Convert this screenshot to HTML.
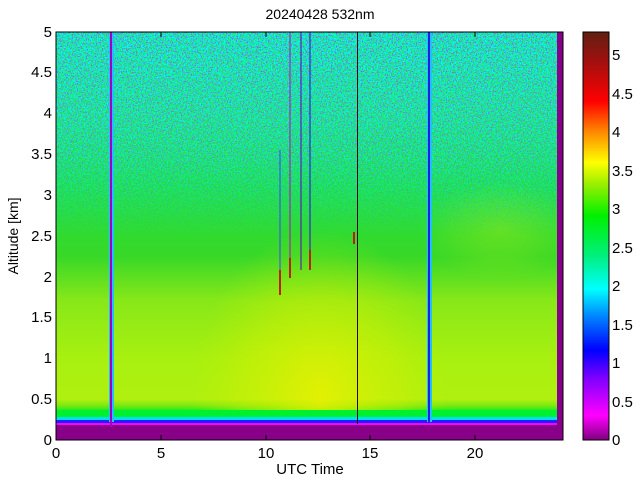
<!DOCTYPE html>
<html><head><style>
body{margin:0;width:640px;height:480px;background:#fff;overflow:hidden;font-family:"Liberation Sans",sans-serif;}
svg{display:block}
</style></head><body>
<svg width="640" height="480" xmlns="http://www.w3.org/2000/svg" font-family="Liberation Sans, sans-serif" font-size="14" fill="#000">
<defs>
<clipPath id="cp"><rect x="56" y="32" width="507" height="408"/></clipPath>
<linearGradient id="bg" x1="0" y1="0" x2="0" y2="1">
<stop offset="0" stop-color="#28e080"/>
<stop offset="0.2" stop-color="#28e068"/>
<stop offset="0.38" stop-color="#20e040"/>
<stop offset="0.55" stop-color="#38d828"/>
<stop offset="0.66" stop-color="#88e818"/>
<stop offset="0.8" stop-color="#a8f010"/>
<stop offset="0.9" stop-color="#b0f010"/>
<stop offset="0.915" stop-color="#80e810"/>
<stop offset="0.932" stop-color="#00f020"/>
<stop offset="0.946" stop-color="#00e8e0"/>
<stop offset="0.953" stop-color="#2020ff"/>
<stop offset="0.96" stop-color="#ff00ff"/>
<stop offset="0.965" stop-color="#880088"/>
<stop offset="1" stop-color="#880088"/>
</linearGradient>
<radialGradient id="yel" cx="0.5" cy="0.5" r="0.5">
<stop offset="0" stop-color="#f0f000" stop-opacity="0.8"/>
<stop offset="0.6" stop-color="#d8f000" stop-opacity="0.4"/>
<stop offset="1" stop-color="#c0f000" stop-opacity="0"/>
</radialGradient>
<linearGradient id="cb" x1="0" y1="1" x2="0" y2="0">
<stop offset="0" stop-color="#800080"/>
<stop offset="0.06" stop-color="#ff00ff"/>
<stop offset="0.15" stop-color="#8000ff"/>
<stop offset="0.22" stop-color="#0000ff"/>
<stop offset="0.3" stop-color="#0080ff"/>
<stop offset="0.37" stop-color="#00ffff"/>
<stop offset="0.45" stop-color="#00f080"/>
<stop offset="0.55" stop-color="#00f000"/>
<stop offset="0.63" stop-color="#a0f000"/>
<stop offset="0.68" stop-color="#ffff00"/>
<stop offset="0.76" stop-color="#ff8000"/>
<stop offset="0.83" stop-color="#ff0000"/>
<stop offset="0.93" stop-color="#a01010"/>
<stop offset="1" stop-color="#602010"/>
</linearGradient>
<linearGradient id="fade" x1="0" y1="0" x2="0" y2="1">
<stop offset="0" stop-color="#fff" stop-opacity="1"/>
<stop offset="0.3" stop-color="#fff" stop-opacity="0.6"/>
<stop offset="0.5" stop-color="#fff" stop-opacity="0"/>
</linearGradient>
<mask id="m"><rect x="56" y="32" width="507" height="408" fill="url(#fade)"/></mask>
<filter id="nz" x="0" y="0" width="1" height="1">
<feTurbulence type="fractalNoise" baseFrequency="0.8" numOctaves="1" seed="3"/>
<feColorMatrix type="matrix" values="0 0 0 0 0.25  0 0 0 0 0.1  0 0 0 0 1  30 0 0 0 -18"/>
</filter>
<filter id="nz2" x="0" y="0" width="1" height="1">
<feTurbulence type="fractalNoise" baseFrequency="0.7" numOctaves="1" seed="9"/>
<feColorMatrix type="matrix" values="0 0 0 0 0  0 0 0 0 0.95  0 0 0 0 1  0 30 0 0 -15"/>
</filter>
</defs>
<text x="320" y="19" text-anchor="middle" font-size="14">20240428 532nm</text>
<g clip-path="url(#cp)">
<rect x="56" y="32" width="507" height="408" fill="url(#bg)"/>
<ellipse cx="320" cy="400" rx="130" ry="170" fill="url(#yel)"/>
<rect x="56" y="410" width="507" height="7" fill="#00f030"/>
<rect x="56" y="417" width="507" height="3" fill="#00e0f0"/>
<rect x="56" y="420" width="507" height="3" fill="#2020ff"/>
<rect x="56" y="423" width="507" height="2" fill="#ff00ff"/>
<rect x="56" y="425" width="507" height="15" fill="#880088"/>
<ellipse cx="500" cy="230" rx="80" ry="50" fill="url(#yel)" opacity="0.35"/>
<rect x="56" y="32" width="507" height="408" filter="url(#nz2)" mask="url(#m)"/>
<rect x="56" y="32" width="507" height="408" filter="url(#nz)" mask="url(#m)"/>
</g>
<rect x="557" y="32" width="6" height="408" fill="#880088"/>
<rect x="109" y="32" width="5" height="390" fill="#20c0ff"/>
<rect x="110" y="32" width="2" height="395" fill="#a000c0"/>
<rect x="427" y="32" width="5" height="390" fill="#20c0ff"/>
<rect x="428" y="32" width="2" height="390" fill="#2020e0"/>
<line x1="357.5" y1="32" x2="357.5" y2="424" stroke="#300020" stroke-width="1"/>
<line x1="290" y1="32" x2="290" y2="270" stroke="#c000c0"/>
<line x1="301" y1="32" x2="301" y2="270" stroke="#6000c0"/>
<line x1="310" y1="32" x2="310" y2="255" stroke="#4000e0"/>
<line x1="280" y1="150" x2="280" y2="285" stroke="#4040ff"/>
<rect x="279" y="270" width="2" height="25" fill="#c02000"/>
<rect x="289" y="258" width="2" height="20" fill="#c02000"/>
<rect x="309" y="250" width="2" height="20" fill="#c02000"/>
<rect x="353" y="232" width="2" height="12" fill="#c02000"/>
<rect x="56" y="32" width="507" height="408" fill="none" stroke="#000"/>
<g stroke="#000">
<line x1="161" y1="440" x2="161" y2="435"/><line x1="266" y1="440" x2="266" y2="435"/><line x1="370" y1="440" x2="370" y2="435"/><line x1="475" y1="440" x2="475" y2="435"/>
<line x1="161" y1="32" x2="161" y2="37"/><line x1="266" y1="32" x2="266" y2="37"/><line x1="370" y1="32" x2="370" y2="37"/><line x1="475" y1="32" x2="475" y2="37"/>
</g>
<g text-anchor="middle" font-size="15"><text x="56" y="458">0</text><text x="161" y="458">5</text><text x="266" y="458">10</text><text x="370" y="458">15</text><text x="475" y="458">20</text></g>
<text x="310" y="474" text-anchor="middle" font-size="15">UTC Time</text>
<g text-anchor="end" font-size="15">
<text x="52" y="445">0</text><text x="52" y="404">0.5</text><text x="52" y="363">1</text><text x="52" y="322">1.5</text><text x="52" y="282">2</text><text x="52" y="241">2.5</text><text x="52" y="200">3</text><text x="52" y="159">3.5</text><text x="52" y="118">4</text><text x="52" y="77">4.5</text><text x="52" y="37">5</text>
</g>
<text transform="translate(18,236) rotate(-90)" text-anchor="middle">Altitude [km]</text>
<rect x="583" y="32" width="26" height="408" fill="url(#cb)" stroke="#000"/>
<g font-size="15">
<text x="612" y="445">0</text><text x="612" y="407">0.5</text><text x="612" y="368">1</text><text x="612" y="330">1.5</text><text x="612" y="291">2</text><text x="612" y="253">2.5</text><text x="612" y="214">3</text><text x="612" y="176">3.5</text><text x="612" y="137">4</text><text x="612" y="99">4.5</text><text x="612" y="60">5</text>
</g>
</svg>
</body></html>
